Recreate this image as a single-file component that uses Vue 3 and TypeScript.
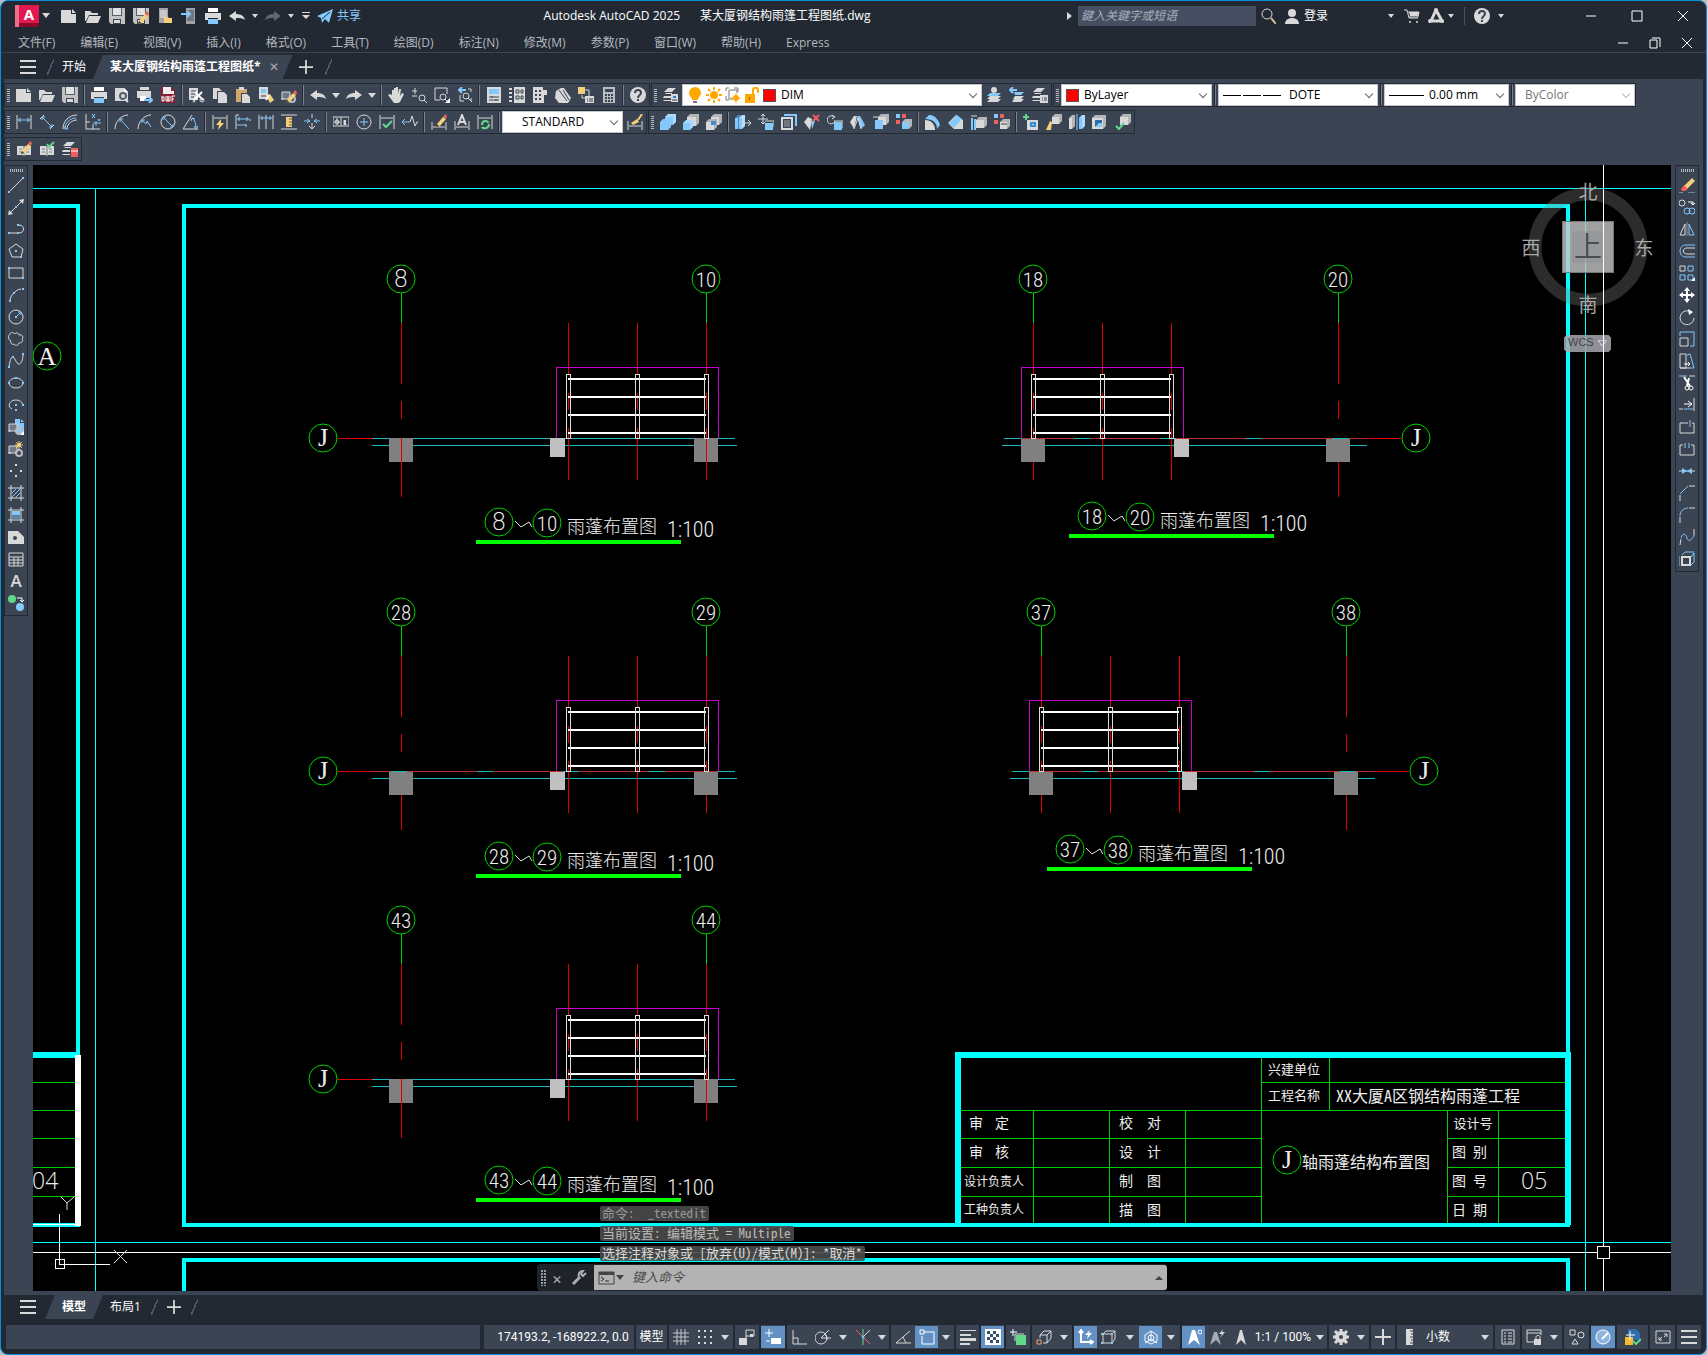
<script setup lang="ts">
import { ref } from 'vue'

const W = '#d9d9d9'
const B = '#85c8fb'
const D = '#3b4453'
const Y = '#f5cf7a'
const R = '#f0605c'
const G = '#62d98a'

const l = (d: string, c = W, w = 1) => `<path d="${d}" fill="none" stroke="${c}" stroke-width="${w}"/>`
const p = (d: string, c = W) => `<path d="${d}" fill="${c}"/>`
const dot = (pts: number[][], c = B) => pts.map(([x, y]) => p(`M${x} ${y}h2v2h-2z`, c)).join('')
const cir = (x: number, y: number, r: number, c = W, w = 1) =>
  `<circle cx="${x}" cy="${y}" r="${r}" fill="none" stroke="${c}" stroke-width="${w}"/>`
const disc = (x: number, y: number, r: number, c = W) => `<circle cx="${x}" cy="${y}" r="${r}" fill="${c}"/>`
const cube = (x: number, y: number, s: number, c = W, t = '#b5b5b5') =>
  p(`M${x} ${y + 3}l3-3h${s}v${s}l-3 3z`, t) + p(`M${x} ${y + 3}h${s}v${s}h-${s}z`, c)
const slab = (x: number, c: string, t: string) => p(`M${x} 4l3-3h3v11l-3 3z`, t) + p(`M${x} 4h3v11h-3z`, c)

const pencil = p('M6 13l6-7 3 2-6 7-4 1z', Y) + p('M12 6l2-3 2 2-1 3z', R) + p('M5 16l1-3 2 2z', '#2b2b2b')
const page = p('M0 2h10v4h5v9H0z') + p('M11 1l4 4h-4z')
const floppy = p('M0 0h16v16H2l-2-2z', '#c2c2c2') + p('M3 0h1v7h8V0h1v8H3z', '#5a606b') + p('M4 0h8v7H4z', '#e2e2e2') + p('M4 11h8v5H4z', D) + p('M5 12h6v3H5z')
const folder = p('M0 3h5l2 2h6v2H4L1 13H0z') + p('M4 8h12l-3 7H1z')
const printer = p('M3 0h10v4H3z', '#fff') + p('M0 5h16v7h-3v-2H3v2H0z') + p('M3 11h10v5H3z', B)
const undo = p('M0 8l7-5v3c5 0 8 2 9 6-3-2-5-2-9-2v3z')
const redo = p('M16 8L9 3v3c-5 0-8 2-9 6 3-2 5-2 9-2v3z')
const layers = p('M5 1h8l-4 4H1z') + p('M3 6h6v1H2zM1 9h7v2H0z') + p('M1 13h7v1H0z')
const stackBlue = p('M4 6h11l-3 3H1z', B) + p('M4 9h11l-3 3H1z') + p('M4 12h11l-3 3H1z')
const book = p('M1 5h6l1 1 1-1h6v9H9l-1 1-1-1H1z') + l('M8 6v8M3 8h3M3 11h3M10 8h3M10 11h3', '#7d838d')
const dimH = l('M1 1v14M15 1v14') + l('M2 4h12')
const block = p('M1 5h8v7H1z', '#727985') + l('M1 5h8v7H1zM0 12h3') + cir(11, 12, 3, '#b7bcc4', 2)

const icons: Record<string, string> = {
  new: page,
  open: folder,
  save: floppy,
  saveas: floppy + pencil,
  openMobile: p('M2 0h9v9H7v6H2z', '#9fa3a9') + p('M3 2h7v8H3z', '#c8c8c8') + p('M7 9h4l1 1h3v5H7z', Y),
  saveMobile: p('M5 0h9v16H5z', '#9fa3a9') + p('M6 2h7v11H6z', '#6f7681') + l('M0 6h9M6 3l3 3-3 3', B, 2),
  print: printer,
  undo,
  redo,
  redoDim: `<g opacity=".35">${redo}</g>`,
  menuDown: p('M4 4h8v1H4z') + p('M4 7h8l-4 4z'),
  plane: p('M0 8L16 1l-4 14-4-4-3 4-1-5z', B) + l('M5 11l8-7', '#222933'),
  preview: p('M1 1h9l4 4v9H1z') + p('M10 1v4h4z', '#fff') + cir(9, 9, 3, '#55606f', 2) + l('M11 12l3 3', W, 2),
  publish: p('M3 0h9v3H3z') + p('M0 4h14v7H0z') + p('M3 9h6v5H3z', '#fff') + l('M7 13h8M12 10l3 3-3 3', B, 2),
  dwf: p('M1 0h10l4 4v12H1z', '#8c1c33') + p('M3 0h8v4h3v3H3z', '#eee') + l('M2 9v5h2v-4H2M6 9v5h2V9v5h2V9M12 15V9h3M12 12h2', '#fff'),
  cut: p('M0 1h9v12H0z') + l('M2 4h5M2 7h5M2 10h3', D) + l('M6 5l8 8M13 5l-8 8', '#fff', 2) + cir(13, 13, 2) + cir(5, 14, 1),
  copy: p('M1 1h6l3 3H5v8H1z') + p('M6 5h6l3 3v8H6z'),
  paste: p('M1 2h11v4H6v9H1z', '#d2a86a') + p('M4 0h5v3H4z') + p('M7 7h5l3 3v6H7z'),
  match: p('M1 0h9v12H1z') + p('M3 2h5v4H3z', B) + l('M3 9h5', D) + p('M8 9l4-2 4 6-4 3z', Y) + l('M11 8l-3 5', '#fff', 2),
  blockEdit: block + pencil,
  pan: p('M4 8V3h2v4V1h2v6V0h2v7l1-5h2l-1 7 2-3 2 1-4 8-2 1H6L0 8l2-1z'),
  zoomRt: l('M1 4h5M4 1v6M1 9h5') + `<g transform="translate(1 2)">${cir(10, 9, 3)}${l('M12 11l3 3')}</g>`,
  zoomWin: l('M1 13V1h12v6') + l('M1 13h5') + cir(9, 10, 3) + l('M11 12l3 3') + p('M11 16h5v-5z', '#fff'),
  zoomPrev: l('M3 8v6h4M14 5V2h-3M14 11v3') + cir(9, 9, 3) + l('M11 11l4 4') + l('M9 3H2M5 0L2 3l3 3', B, 2),
  props: p('M1 0h14v16H1z') + p('M3 2h10v5H3z', B) + l('M3 10h10M3 13h10M6 9v2M10 12v2', D),
  design: p('M0 1h3v2H0zM0 5h3v2H0zM0 9h3v2H0zM0 13h3v2H0zM5 0h11v16H5z') + l('M7 3h3v3H7zM12 3h2v3h-2zM7 9h3v3H7zM12 9h2v3h-2z', D),
  palettes: p('M1 0h10v3h4v5h-3v8H1z') + p('M3 3h2v2H3zM7 3h2v2H7zM3 7h2v2H3zM7 7h2v2H7zM3 11h2v2H3zM7 11h2v2H7z', D),
  sheets: p('M1 4l5-3h3l7 10-3 5H4l-4-5z') + l('M4 3l8 11M8 3l6 10', D),
  markup: p('M0 0h7v7H0z', Y) + l('M7 3h4v6M4 8v3h4') + p('M7 9h9v7H7z') + l('M9 12h1M11 12h4M9 14h1M11 14h4', D),
  calc: p('M2 0h12v16H2z', '#b9bcc1') + p('M4 2h8v3H4z', D) + p('M4 7h2v2H4zM7 7h2v2H7zM10 7h2v2h-2zM4 10h2v2H4zM7 10h2v2H7zM10 10h2v2h-2zM4 13h2v2H4zM7 13h2v2H7zM10 13h2v2h-2z', D),
  help: disc(8, 8, 8) + l('M5 6c0-4 6-4 6 0 0 2-3 2-3 5M8 12v2', '#3b4453', 2),
  layerProps: layers + p('M8 7h7v8H8z') + p('M10 9h3v2h-3z', '#2f7fc4') + l('M9 13h5', D),
  bulb: disc(8, 6, 6, '#ffa800') + p('M5 11h6v2H5z', '#ffa800') + p('M6 14h4v2H6z', '#777'),
  sun: disc(8, 8, 4, '#ffa800') + l('M8 0v3M8 13v3M0 8h3M13 8h3M2 2l2 2M12 12l2 2M14 2l-2 2M4 12l-2 2', '#ffa800', 2),
  vpSun: l('M1 4V1h3M9 1h4v4M1 9v4h3M4 3v9h4M4 3h8v3', '#777') + disc(11, 11, 3, '#ffa800') + l('M11 6v10M6 11h10', '#ffa800'),
  lock: p('M1 7h10v9H1z', '#ffa800') + l('M9 8V3c0-3 5-3 5 0v3', '#ffa800', 2) + p('M5 10h1v3H5z', '#9c6500'),
  layerCur: disc(8, 3, 3) + stackBlue,
  layerPrev: p('M5 5h10l-3 3H6z', B) + p('M6 9h9l-3 3H4z') + p('M5 12h10l-3 3H3z') + l('M8 3H1M4 0L1 3l3 3', B, 2),
  layerStates: layers + p('M8 8h8v8H8z') + l('M10 11h1M12 11h3M10 13h1M12 13h3', D),
  dimLin: l('M1 1v14M15 1v14') + l('M2 6h12M5 4L2 6l3 2M11 4l3 2-3 2', B),
  dimAl: l('M1 5l4-4M11 15l4-4') + l('M3 3l10 10M3 6V3h3M13 10v3h-3', B),
  dimArc: l('M1 15C1 7 7 1 15 1M5 15C5 10 10 6 15 6') + l('M3 15C3 9 8 4 14 4M3 12v3h3', B),
  dimOrd: l('M1 0v15h14M8 10v5M1 8h4') + l('M8 9h8M11 7v5M7 0l3 4M10 0L7 4M13 5l1 2 1-2', B),
  dimRad: l('M1 15C1 8 7 1 14 1') + l('M6 5l9 10M6 8V5h3', B),
  dimJog: l('M1 15C1 8 7 1 14 1') + l('M5 6l4 4 1-3 4 6M5 9V6h3', B),
  dimDia: cir(8, 8, 7) + l('M3 3l10 10M3 6V3h3M13 10v3h-3', B),
  dimAng: l('M15 15H0L9 1') + l('M9 4c3 2 4 6 4 10M8 7l1-3 3 1M11 12l2 3 2-3', B),
  dimQuick: dimH + p('M9 5l-5 6h3l-1 5 6-7H9z', Y),
  dimBase: l('M1 1v14M15 5v2M11 10v3M1 1h3') + l('M2 5h12M2 11h9M4 3v4M12 3v4', B),
  dimCont: l('M1 1v14M8 1v14M15 1v14') + l('M2 4h12M4 2v4M12 2v4', B),
  dimSpace: l('M0 1h16M0 15h16') + p('M5 3h6v10H5z', Y) + l('M8 5h3M8 8h3M8 11h3', '#73592a'),
  dimBreak: l('M8 0v4M8 9v6M5 12l3 3 3-3') + l('M0 7h6M10 7h6M3 5l3 2-3 2M13 5l-3 2 3 2', B),
  tol: l('M0 3h16v9H0zM8 3v9M1 8h6M4 4v7M11 6v5M13 10v1') + cir(4, 8, 2) + l('M12 6v5', W, 2),
  center: cir(8, 8, 7) + l('M4 8h8M8 4v8', B),
  inspect: dimH + l('M4 10l3 3 6-6', G, 2),
  jogLin: l('M8 8l2-6 3 10 2-4h1') + l('M0 8h8M3 5L0 8l3 3', B),
  dimEdit: l('M1 8v8M15 8v8M2 13h12') + `<g transform="translate(0 -3)">${pencil}</g>`,
  dimTedit: l('M1 7v9M15 7v9M2 13h12') + l('M4 11L8 1l4 10M5 8h6', W, 2),
  dimUpd: dimH + l('M5 11c0-5 6-5 6-2M12 10c0 5-6 5-7 3', G, 2),
  dimStyle: l('M1 7v9M15 7v9M2 12h12') + l('M15 0l-4 6', Y, 2) + p('M4 9l6-4 2 3-6 3z', Y),
  union: cube(5, 0, 8, B, '#a9d9ff') + cube(0, 5, 8, B, B),
  subtract: cube(4, 0, 9) + cube(0, 6, 7, B, '#a9d9ff'),
  intersect: cube(5, 0, 8) + cube(0, 5, 8) + p('M5 7h5v4H5z', '#3f8fd0'),
  extrude: slab(0, B, '#4e86b5') + slab(4, B, '#b9dcf7') + l('M10 9h6M13 6l3 3-3 3'),
  moveF: l('M5 0v10M0 5h10M3 2l2-2 2 2M3 8l2 2 2-2') + p('M7 9h8v7H7z', B) + l('M7 7h9v6', W),
  offsetF: l('M1 4h10v11H1z', W, 2) + p('M3 6h6v7H3z', '#6f7681') + l('M3 1h12v11', B, 2),
  deleteF: p('M0 8l4-5 4 2-2 11z') + p('M7 7h4l-3 8z', B) + l('M9 1l6 6M15 1L9 7', R, 2),
  rotateF: l('M7 3a4 4 0 1 0 1 4M5 1l3 2-3 2') + p('M7 8h8v8H7z', B) + l('M7 7h9v7'),
  taperF: p('M0 8l4-6h3L4 15z') + p('M7 2h3l5 9-4 4z', B) + l('M4 15L8 4l3 11'),
  copyF: cube(5, 0, 8) + p('M2 6h8v9H2z', B) + l('M0 3h5'),
  colorF: p('M0 0h4v4H0z', B) + p('M6 0h4v4H6z', R) + p('M0 6h4v4H0z', R) + cube(6, 5, 7, B),
  fillet: p('M0 5l4-4c5-1 10 5 11 10l-3 4C12 9 8 5 0 5z', B) + p('M0 6c6 0 10 4 10 10H0z'),
  chamfer: p('M0 9l8-8 7 5v9H6z') + p('M1 9l8-8 5 4-8 9z', B),
  colorE: cube(5, 3, 8) + l('M1 16V4M4 16V5', B, 2) + l('M0 2h6', W),
  copyE: p('M0 0h4v4H0z', B) + p('M6 0h4v4H6z', R) + p('M0 6h4v4H0z', R) + cube(6, 5, 7) + l('M7 10h6', D),
  imprint: l('M3 0v6M0 3h6', G, 2) + p('M4 6h11v10H4z') + l('M8 9h4v3H8z', '#2f8fd8', 2),
  clean: cube(6, 0, 7) + p('M4 7l2 1-1 8H0z', Y),
  separate: slab(0, W, '#b5b5b5') + slab(10, B, '#a9d9ff') + l('M8 0v16', B),
  shell: cube(0, 1, 11) + p('M3 6h7v7H3z', '#2b6ea5') + p('M7 9h3v4H3z', B),
  checkS: cube(5, 0, 8) + l('M1 12l3 3 5-6', G, 2),
  refEdit: book + `<g transform="translate(0 -3)">${pencil}</g>`,
  refCheck: book + l('M8 3l2 3 5-5', G, 2),
  layerDel: layers + p('M9 7h7v9H9z', R) + l('M9 10h7', '#fff'),
  line: l('M2 14L14 2') + dot([[0, 14], [14, 0]]),
  xline: l('M2 14L14 2') + p('M0 16l1-5 4 4zM16 0l-1 5-4-4z') + dot([[7, 7]]),
  pline: l('M2 12h7M11 4c6 0 6 8 0 8') + dot([[0, 11], [9, 11], [9, 3]]),
  polygon: l('M8 1l7 5-2 8H4L1 6z') + dot([[7, 7], [12, 13]]),
  rect: l('M1 3h14v10H1z') + dot([[0, 2], [14, 12]]),
  arc: l('M2 13C3 8 7 3 13 2') + dot([[1, 13], [5, 5], [14, 1]]),
  circle: cir(8, 8, 7) + l('M10 3h3v3M9 7l4-4', B) + dot([[7, 7]]),
  cloud: l('M2 3c1-3 4-1 5 0 1-2 4-1 4 1 3-1 5 2 3 4 2 2-1 4-3 4-1 3-4 3-5 1-2 1-4-1-3-3C0 9 0 5 2 3z'),
  spline: l('M1 14C2 6 4 3 5 4c3 2 3 7 6 7 2 0 4-4 4-9') + dot([[0, 13], [4, 3], [14, 0]]),
  ellipse: `<ellipse cx="8" cy="8" rx="7" ry="5" fill="none" stroke="${W}"/>` + dot([[0, 7], [14, 7], [7, 2]]),
  ellArc: l('M4 12C-1 10 1 3 8 3c4 0 6 2 7 5') + dot([[7, 7], [14, 7], [7, 12]]),
  insert: p('M7 0h5v4h4v10H9V6H7z', B) + p('M13 0l3 3h-3z', B) + block + p('M16 12v4h-4z', '#fff'),
  block: block + disc(11, 4, 2, Y) + l('M11 0v8M7 4h8M8 1l6 6M14 1L8 7', Y),
  point: dot([[7, 1], [2, 7], [12, 7], [7, 12]], W),
  hatch: l('M3 0v16M13 0v16M0 3h16M0 13h16') + l('M4 8l4-4M4 12l8-8M8 12l4-4', B, 1),
  gradient: l('M3 0v16M13 0v16M0 3h16M0 13h16') + p('M4 4h8v4H4z', B) + p('M4 8h8v4H4z', '#6083a3'),
  region: p('M0 2h10l6 6v7H0z') + disc(7, 9, 2, D),
  table: l('M1 2h14v13H1zM1 6h14M1 9h14M1 12h14M6 6v9M10 6v9'),
  addSel: disc(4, 4, 4, G) + disc(12, 12, 4, B) + l('M9 3h5v4M12 5l2 2 2-2', '#fff'),
  erase: p('M5 9l8-8 3 3-8 8z', Y) + p('M2 12l3-4 4 4-3 2H3z', R) + l('M0 16h4') + l('M9 16h7', B),
  copyO: cir(3, 4, 3) + cir(8, 12, 3, B) + cir(13, 12, 3, B) + l('M9 3h5v3M12 4l2 2 2-2', '#fff'),
  mirror: l('M6 3v11H1z') + l('M10 3v11h5z', B) + l('M8 1v14', '#8d939c'),
  offset: l('M16 2H7c-8 0-8 12 0 12h9', B) + l('M16 5H8c-5 0-5 6 0 6h8', W),
  array: l('M1 1h5v5H1z') + l('M9 1h5v5H9zM1 10h5v5H1zM9 10h5v5H9z', B) + p('M16 12v4h-4z', '#fff'),
  move: l('M8 1v14M1 8h14', '#fff', 2) + p('M8 0l3 4H5zM8 16l3-4H5zM0 8l4-3v6zM16 8l-4-3v6z', '#fff'),
  rotate: l('M12 3a7 7 0 1 0 3 6', W) + p('M9 0l5 3-4 3z', '#fff'),
  scale: l('M1 7h8v8H1z') + l('M1 5V1h14v14h-4', B),
  stretch: l('M7 15H1V1h6v14M1 15h10') + l('M8 2l3-1 4 14h-4', B) + l('M5 11h6M9 9l2 2-2 2', '#fff'),
  trim: l('M0 1h8', B) + l('M10 1h6') + l('M5 2l6 9M10 3L8 11', '#fff', 2) + cir(12, 13, 2, '#fff') + cir(8, 13, 2, '#fff'),
  extend: l('M15 1v13M0 12h4') + l('M5 12h9', B) + l('M5 7h7M9 4l4 3-4 3', '#fff'),
  breakPt: l('M9 4H1v10h14V4h-2') + l('M11 1v7', B),
  breakO: l('M4 4H1v10h14V4h-3') + l('M6 2v5M10 2v5', B),
  join: l('M0 8h16') + p('M3 5l5 3-5 3zM13 5L8 8l5 3z', B),
  chamferO: l('M1 16v-6M10 1h6') + l('M1 9l8-8', B),
  filletO: l('M1 16v-6M10 1h6') + l('M1 9c0-5 4-8 8-8', B),
  blend: l('M1 16l1-6M15 0v6') + l('M2 9c2-6 5-4 6 0s5 3 7-3', B),
  explode: l('M3 6h8v8H3z', W, 2) + l('M3 4l3-3h9M12 6l3-4v9l-3 3M0 5v10', B),
  search: cir(7, 6, 5) + l('M11 10l5 6', '#d8b98a', 2),
  person: disc(8, 5, 4) + p('M1 16c0-8 14-8 14 0z'),
  cart: l('M0 2h3l2 8h9M4 4h11l-1 5H5', W) + p('M5 4h10l-1 4H6z') + disc(6, 14, 1) + disc(13, 14, 1),
  adsk: l('M8 2L3 13h11L8 2', W, 3) + disc(8, 2, 2) + disc(2, 13, 2) + disc(14, 13, 2),
  min: l('M3 8h10', '#fff'),
  max: l('M3 3h10v10H3z', '#fff'),
  restore: l('M3 5h7v8H3zM5 3h8v9', '#fff'),
  close: l('M3 3l10 10M13 3L3 13', '#fff'),
  grid: l('M4 0v16M8 0v16M12 0v16M0 4h16M0 8h16M0 12h16', '#c4c7cc'),
  snap: dot([[1, 1], [7, 1], [13, 1], [1, 7], [7, 7], [13, 7], [1, 13], [7, 13], [13, 13]], W),
  infer: l('M7 11V1h8v6H7') + p('M0 9h8v7H0z') + p('M11 5h3v3h-3z', W),
  dyn: l('M4 0v8M0 4h8', '#fff') + p('M6 9h10v6H6z', '#fff') + l('M1 12h4', '#fff'),
  ortho: l('M2 1v14h14M2 9h5v6', W),
  polar: cir(6, 9, 6) + l('M6 9h10M6 9l8-8M10 6c2 1 2 3 2 5'),
  iso: l('M1 1l14 14', R) + l('M15 1L8 8', W) + l('M8 0v16', G) + cir(8, 8, 1, B),
  otrack: l('M15 2L1 14h15M8 8l3 6', W),
  osnap: l('M5 3h10v12H3V7', '#fff') + l('M1 1h4v4H1z', '#fff', 1),
  lwt: p('M0 1h16v1H0zM0 5h11v2H0zM0 9h16v3H0zM0 14h10v2H0z'),
  transp: p('M0 0h16v16H0z', '#fff') + p('M2 2h3v3H2zM8 2h3v3H8zM5 5h3v3H5zM11 5h3v3h-3zM2 8h3v3H2zM8 8h3v3H8zM5 11h3v3H5zM11 11h3v3h-3z', '#34506f'),
  cycle: l('M3 0v7M0 3h7', '#fff') + p('M6 6h10v10H6z', G) + l('M5 12V5h9', W),
  osnap3: l('M4 9V6h7v8H7M4 6l4-4h7v7l-4 5M11 6l4-4') + l('M1 11h4v4H1z', '#f3a56a', 1),
  ducs: l('M3 1v12h12M1 4l2-3 2 3M12 11l3 2-3 2', '#fff', 2) + p('M12 1L7 6h3l-1 4 5-6h-3z', '#fff'),
  filter: l('M2 5h9v9H2zM5 2h9v8M2 5l3-3M11 5l3-3M11 14l3-4') + dot([[0, 4], [10, 4], [0, 13], [10, 13]]),
  gizmo: l('M8 2L2 6v6l6 3 6-3V6zM8 2v8l-6 4M8 10l6 4', '#fff') + cir(8, 9, 3, '#fff'),
  annoA: p('M6 1h3l5 15-6-5-6 5z', '#fff') + cir(14, 3, 2, '#fff'),
  annoB: p('M5 3h3l4 13-5-5-6 5z', '#a5acb6') + p('M14 0l-4 5h3l-2 4 5-6h-3z', W),
  annoC: p('M7 1h2l4 15-5-5-5 5z'),
  gear: cir(8, 8, 4, W, 4) + l('M8 0v3M8 13v3M0 8h3M13 8h3M2 2l3 3M11 11l3 3M14 2l-3 3M5 11l-3 3', W, 3),
  plus: l('M8 0v16M0 8h16', W, 2),
  ruler: p('M5 0h7v16H5z') + l('M9 2h4M10 5h3M9 8h4M10 11h3M9 14h4', D),
  quick: l('M2 1h12v14H2z') + l('M4 4h2M8 4h4M4 7h2M8 7h4M4 10h2M8 10h4M4 13h2M8 13h4', W),
  lockUi: l('M8 13H1V1h14v5M1 4h14') + p('M8 10h7v6H8z') + l('M10 10V8c0-2 4-2 4 0v2'),
  isolate: l('M1 1h5v5H1zM7 15H3l3-5 3 5z') + cir(12, 6, 3),
  perf: disc(8, 8, 7, '#8fb4dc') + cir(8, 8, 7, '#fff') + l('M7 10l6-6', '#fff', 2),
  trusted: p('M3 0h8l4 4v7H3z', '#2f6fb0') + p('M0 8h8v8H0z', '#f5b82e') + l('M5 2v9M1 6h9', '#fff') + l('M8 12l3 3 5-5', G, 2),
  full: l('M1 2h14v12H1z') + l('M9 5h3v3M7 11H4V8M9 8l3-3M4 11l3-3'),
  lines: p('M0 1h16v2H0zM0 7h16v2H0zM0 13h16v2H0z'),
  wrench: l('M2 14l7-7', '#a9adb3', 3) + l('M15 3l-3 3-2-2 2-3c-4 0-5 3-4 6', '#a9adb3', 2),
}

const menus = ['文件(F)', '编辑(E)', '视图(V)', '插入(I)', '格式(O)', '工具(T)', '绘图(D)', '标注(N)', '修改(M)', '参数(P)', '窗口(W)', '帮助(H)', 'Express']
const quickAccess = ['new', 'open', 'save', 'saveas', 'openMobile', 'saveMobile', 'print', 'undo', 'v', 'redoDim', 'v', 'menuDown']
const standard = ['new', 'open', 'save', '|', 'print', 'preview', 'publish', 'dwf', '|', 'cut', 'copy', 'paste', 'match', 'blockEdit', '|', 'undo', 'v', 'redo', 'v', '|', 'pan', 'zoomRt', 'zoomWin', 'zoomPrev', '|', 'props', 'design', 'palettes', 'sheets', 'markup', 'calc', '|', 'help']
const dims = ['dimLin', 'dimAl', 'dimArc', 'dimOrd', '|', 'dimRad', 'dimJog', 'dimDia', 'dimAng', '|', 'dimQuick', 'dimBase', 'dimCont', 'dimSpace', 'dimBreak', '|', 'tol', 'center', 'inspect', 'jogLin', '|', 'dimEdit', 'dimTedit', 'dimUpd', '|']
const solids = ['union', 'subtract', 'intersect', '|', 'extrude', 'moveF', 'offsetF', 'deleteF', 'rotateF', 'taperF', 'copyF', 'colorF', '|', 'fillet', 'chamfer', 'colorE', 'copyE', '|', 'imprint', 'clean', 'separate', 'shell', 'checkS']
const refs = ['refEdit', 'refCheck', 'layerDel']
const drawTools = ['line', 'xline', 'pline', 'polygon', 'rect', 'arc', 'circle', 'cloud', 'spline', 'ellipse', 'ellArc', 'insert', 'block', 'point', 'hatch', 'gradient', 'region', 'table', 'text', 'addSel']
const modifyTools = ['erase', 'copyO', 'mirror', 'offset', 'array', 'move', 'rotate', 'scale', 'stretch', 'trim', 'extend', 'breakPt', 'breakO', 'join', 'chamferO', 'filletO', 'blend', 'explode']

interface StatusItem { icon?: string; text?: string; w: number; on?: boolean; caret?: boolean }
const statusGroups: StatusItem[][] = [
  [{ text: '模型', w: 31 }],
  [{ icon: 'grid', w: 24 }, { icon: 'snap', w: 24 }, { caret: true, w: 16 }],
  [{ icon: 'infer', w: 24 }],
  [{ icon: 'dyn', w: 24, on: true }],
  [{ icon: 'ortho', w: 24 }, { icon: 'polar', w: 23 }, { caret: true, w: 17 }, { icon: 'iso', w: 23 }, { caret: true, w: 15 }],
  [{ icon: 'otrack', w: 24 }, { icon: 'osnap', w: 23, on: true }, { caret: true, w: 16 }],
  [{ icon: 'lwt', w: 23 }],
  [{ icon: 'transp', w: 23, on: true }],
  [{ icon: 'cycle', w: 24 }],
  [{ icon: 'osnap3', w: 24 }, { caret: true, w: 16 }],
  [{ icon: 'ducs', w: 23, on: true }, { icon: 'filter', w: 24 }, { caret: true, w: 18 }, { icon: 'gizmo', w: 23, on: true }, { caret: true, w: 18 }],
  [{ icon: 'annoA', w: 23, on: true }, { icon: 'annoB', w: 24 }, { icon: 'annoC', w: 24 }, { text: '1:1 / 100%', w: 60 }, { caret: true, w: 14 }],
  [{ icon: 'gear', w: 24 }, { caret: true, w: 16 }],
  [{ icon: 'plus', w: 24 }],
  [{ icon: 'ruler', w: 24 }, { text: '小数', w: 34 }, { text: '', w: 22 }, { caret: true, w: 16 }],
  [{ icon: 'quick', w: 25 }],
  [{ icon: 'lockUi', w: 24 }, { caret: true, w: 16 }],
  [{ icon: 'isolate', w: 25 }],
  [{ icon: 'perf', w: 24, on: true }],
  [{ icon: 'trusted', w: 31 }],
  [{ icon: 'full', w: 25 }],
  [{ icon: 'lines', w: 24 }],
]

interface Detail { x: number; y: number; flip: boolean; a: string; b: string; tx: number; ty: number; red: boolean }
const details: Detail[] = [
  { x: 401, y: 0, flip: false, a: '8', b: '10', tx: 499, ty: 522, red: false },
  { x: 1033, y: 0, flip: true, a: '18', b: '20', tx: 1092, ty: 516, red: true },
  { x: 401, y: 333, flip: false, a: '28', b: '29', tx: 499, ty: 856, red: true },
  { x: 1041, y: 333, flip: true, a: '37', b: '38', tx: 1070, ty: 849, red: true },
  { x: 401, y: 641, flip: false, a: '43', b: '44', tx: 499, ty: 1180, red: false },
]
const SPAN = 305
const px = (d: Detail, x: number) => d.x + (d.flip ? SPAN - x : x)
const rx = (d: Detail, x: number, w: number) => (d.flip ? px(d, x + w) : px(d, x))
const posts = [167, 236, 305]
const beams = [379, 397, 415, 433]

interface Label { x: number; y: number; t: string; s: number }
const labels: Label[] = [
  { x: 1294, y: 1070, t: '兴建单位', s: 13 },
  { x: 1294, y: 1096, t: '工程名称', s: 13 },
  ...[['审', '定', '校', '对'], ['审', '核', '设', '计'], ['', '', '制', '图'], ['', '', '描', '图']].flatMap((row, i) =>
    [976, 1002, 1126, 1154].map((x, j) => ({ x, y: 1124 + i * 29, t: row[j], s: 14 })),
  ),
  { x: 994, y: 1182, t: '设计负责人', s: 12 },
  { x: 994, y: 1210, t: '工种负责人', s: 12 },
  { x: 1473, y: 1124, t: '设计号', s: 13 },
  ...[['图', '别'], ['图', '号'], ['日', '期']].flatMap((row, i) =>
    [1459, 1480].map((x, j) => ({ x, y: 1153 + i * 29, t: row[j], s: 14 })),
  ),
]

const keyword = ref('')
const command = ref('')
</script>

<template>
  <div class="window">
    <header class="title">
      <button class="app" aria-label="应用程序菜单"><b>A</b></button>
      <span class="caret app-caret"></span>
      <div class="qat">
        <template v-for="(i, k) in quickAccess" :key="k">
          <span v-if="i === 'v'" class="caret small"></span>
          <button v-else class="q" :aria-label="i"><svg viewBox="0 0 16 16" v-html="icons[i]"></svg></button>
        </template>
      </div>
      <button class="share"><svg viewBox="0 0 16 16" v-html="icons.plane"></svg>共享</button>
      <div class="spacer"></div>
      <h1><span>Autodesk AutoCAD 2025</span><span>某大厦钢结构雨篷工程图纸.dwg</span></h1>
      <div class="spacer"></div>
      <div class="info">
        <span class="tri"></span>
        <input v-model="keyword" type="text" aria-label="搜索" placeholder="鍵入关鍵字或短语" />
        <button class="q" aria-label="搜索"><svg viewBox="0 0 16 16" v-html="icons.search"></svg></button>
        <button class="login"><svg viewBox="0 0 16 16" v-html="icons.person"></svg>登录</button>
        <span class="caret small"></span>
        <button class="q" aria-label="购物车"><svg viewBox="0 0 16 16" v-html="icons.cart"></svg></button>
        <button class="q" aria-label="Autodesk"><svg viewBox="0 0 16 16" v-html="icons.adsk"></svg></button>
        <span class="caret small"></span>
        <span class="bar"></span>
        <button class="q" aria-label="帮助"><svg viewBox="0 0 16 16" v-html="icons.help"></svg></button>
        <span class="caret small"></span>
      </div>
      <div class="win">
        <button v-for="i in ['min', 'max', 'close']" :key="i" :aria-label="i"><svg viewBox="0 0 16 16" v-html="icons[i]"></svg></button>
      </div>
    </header>

    <nav class="menu">
      <a v-for="m in menus" :key="m" href="#">{{ m }}</a>
      <div class="spacer"></div>
      <div class="doc">
        <button v-for="i in ['min', 'restore', 'close']" :key="i" :aria-label="i"><svg viewBox="0 0 16 16" v-html="icons[i]"></svg></button>
      </div>
    </nav>

    <div class="tabs files">
      <button class="burger" aria-label="文件列表"><svg viewBox="0 0 16 16" v-html="icons.lines"></svg></button>
      <span class="slash"></span>
      <button class="tab">开始</button>
      <button class="tab active">某大厦钢结构雨篷工程图纸*<i>✕</i></button>
      <button class="add" aria-label="新图形"><svg viewBox="0 0 16 16" v-html="icons.plus"></svg></button>
      <span class="slash"></span>
    </div>

    <section class="bars">
      <div class="row">
        <div class="toolbar">
          <span class="grip"></span>
          <template v-for="(i, k) in standard" :key="k">
            <span v-if="i === '|'" class="sep"></span>
            <span v-else-if="i === 'v'" class="caret"></span>
            <button v-else :aria-label="i"><svg viewBox="0 0 16 16" v-html="icons[i]"></svg></button>
          </template>
        </div>
        <div class="toolbar">
          <span class="grip"></span>
          <button aria-label="图层特性"><svg viewBox="0 0 16 16" v-html="icons.layerProps"></svg></button>
          <label class="combo layer">
            <svg v-for="i in ['bulb', 'sun', 'vpSun', 'lock']" :key="i" viewBox="0 0 16 16" v-html="icons[i]"></svg>
            <span class="swatch"></span>
            <select aria-label="图层"><option>DIM</option></select><i></i>
          </label>
          <button v-for="i in ['layerCur', 'layerPrev', 'layerStates']" :key="i" :aria-label="i"><svg viewBox="0 0 16 16" v-html="icons[i]"></svg></button>
        </div>
        <div class="toolbar">
          <span class="grip"></span>
          <label class="combo color"><span class="swatch"></span><select aria-label="颜色"><option>ByLayer</option></select><i></i></label>
          <span class="sep"></span>
          <label class="combo ltype"><span class="dashes"></span><select aria-label="线型"><option>DOTE</option></select><i></i></label>
          <span class="sep"></span>
          <label class="combo lweight"><span class="stroke"></span><select aria-label="线宽"><option>0.00 mm</option></select><i></i></label>
          <span class="sep"></span>
          <label class="combo plot"><select aria-label="打印样式" disabled><option>ByColor</option></select><i></i></label>
        </div>
      </div>
      <div class="row">
        <div class="toolbar">
          <span class="grip"></span>
          <template v-for="(i, k) in dims" :key="k">
            <span v-if="i === '|'" class="sep"></span>
            <button v-else :aria-label="i"><svg viewBox="0 0 16 16" v-html="icons[i]"></svg></button>
          </template>
          <label class="combo dimstyle"><select aria-label="标注样式"><option>STANDARD</option></select><i></i></label>
          <button aria-label="标注样式管理"><svg viewBox="0 0 16 16" v-html="icons.dimStyle"></svg></button>
        </div>
        <div class="toolbar">
          <span class="grip"></span>
          <template v-for="(i, k) in solids" :key="k">
            <span v-if="i === '|'" class="sep"></span>
            <button v-else :aria-label="i"><svg viewBox="0 0 16 16" v-html="icons[i]"></svg></button>
          </template>
        </div>
      </div>
      <div class="row">
        <div class="toolbar">
          <span class="grip"></span>
          <button v-for="i in refs" :key="i" :aria-label="i"><svg viewBox="0 0 16 16" v-html="icons[i]"></svg></button>
        </div>
      </div>
    </section>

    <main class="work">
      <div class="side left">
        <div class="toolbar vertical">
          <span class="grip"></span>
          <template v-for="i in drawTools" :key="i">
            <button v-if="i === 'text'" class="mtext">A</button>
            <button v-else :aria-label="i"><svg viewBox="0 0 16 16" v-html="icons[i]"></svg></button>
          </template>
        </div>
      </div>

      <div class="canvas">
        <svg class="sheet" viewBox="33 165 1638 1126" preserveAspectRatio="xMinYMin slice">
          <g class="thin cyan">
            <path d="M33 188H1671M95 188V1291M1585 188V1291M33 1242H1671" />
          </g>
          <g class="thick cyan">
            <path d="M33 206H78V1227M184 204V1225H1570M182 206H1568V1227M184 1291V1260H1568V1291" />
          </g>

          <path class="cyan bold" d="M33 1055H76" />
          <path class="green" d="M33 1082H75M33 1110H75M33 1138H75M33 1167H75M33 1196H75" />
          <path class="thick cyan" d="M33 1225H78" />
          <path class="white" d="M33 1224H75" />
          <rect x="75" y="1055" width="6" height="171" fill="#fff" />
          <text class="num" x="32" y="1189">04</text>
          <circle class="green" cx="47" cy="356" r="14" />
          <text class="roman" x="47" y="365">A</text>

          <g v-for="d in details" :key="d.a">
            <g :transform="`translate(0 ${d.y})`">
              <path class="cyan dimc" :d="`M${px(d, -29)} 438H${px(d, 334)}M${px(d, -29)} 445H${px(d, 336)}`" />
              <rect :x="rx(d, -12, 24)" y="438" width="24" height="24" fill="#808080" />
              <rect :x="rx(d, 293, 24)" y="438" width="24" height="24" fill="#808080" />
              <rect :x="rx(d, 149, 15)" y="438" width="15" height="19" fill="#c0c0c0" />
              <template v-if="d.red">
                <path class="cyan dimc" :d="`M${px(d, -29)} 438H${px(d, 317)}`" />
                <path class="redmix" :d="`M${px(d, -29)} 438H${px(d, 317)}`" />
              </template>
              <path class="red" :d="`M${px(d, -63)} 438H${px(d, -29)}`" />
              <path class="red" :d="`M${px(d, 0)} 323V384M${px(d, 0)} 401V419M${px(d, 0)} ${d.red ? 462 : 438}V497`" />
              <path
                v-for="x in posts" :key="x" class="red"
                :d="`M${px(d, x)} 323V374M${px(d, x)} 393V410M${px(d, x)} 428V438M${px(d, x)} ${d.red && x === 305 ? 462 : 438}V480`"
              />
              <path class="magenta" :d="`M${px(d, 155)} 438V367H${px(d, 317)}V438`" />
              <path v-for="y in beams" :key="y" class="beam" :d="`M${px(d, 167)} ${y}H${px(d, 305)}`" />
              <rect v-for="x in posts" :key="x" class="white post" :x="px(d, x) - 2" y="374" width="4" height="64" />
              <path class="green" :d="`M${d.x} 293V323M${d.x + SPAN} 293V323`" />
              <circle class="green" :cx="d.x" cy="279" r="14" />
              <circle class="green" :cx="d.x + SPAN" cy="279" r="14" />
              <circle class="green" :cx="px(d, -78)" cy="438" r="14" />
              <text :class="d.a.length > 1 ? 'tag' : 'tag wide'" :x="d.x" y="287">{{ d.a }}</text>
              <text class="tag" :x="d.x + SPAN" y="287">{{ d.b }}</text>
              <text class="roman" :x="px(d, -78)" y="446">J</text>
            </g>
            <g :transform="`translate(${d.tx} ${d.ty})`">
              <circle class="green" cx="0" cy="0" r="14" />
              <circle class="green" cx="48" cy="1" r="14" />
              <text :class="d.a.length > 1 ? 'tag' : 'tag wide'" x="0" y="8">{{ d.a }}</text>
              <text class="tag" x="48" y="9">{{ d.b }}</text>
              <path class="zig" d="M16 -1L22 5L30 0L33 5" />
              <text class="caption" x="68" y="11">雨蓬布置图</text>
              <text class="ratio" x="168" y="15">1:100</text>
              <path d="M-23 20H182" stroke="#0f0" stroke-width="4" fill="none" />
            </g>
          </g>

          <g class="green">
            <path d="M1261 1056V1223M1329 1056V1110M1261 1082H1565M960 1110H1565" />
            <path d="M960 1138H1261M960 1167H1261M960 1196H1261M1447 1138H1565M1447 1167H1565M1447 1196H1565" />
            <path d="M1033 1110V1223M1109 1110V1223M1185 1110V1223M1447 1110V1223M1498 1110V1223" />
          </g>
          <path class="cyan bold" d="M958 1225V1055H1568V1225" />
          <text v-for="(t, k) in labels" :key="k" class="cell" :x="t.x" :y="t.y + 4" :font-size="t.s">{{ t.t }}</text>
          <text class="name" x="1336" y="1102">XX大厦A区钢结构雨蓬工程</text>
          <circle class="green" cx="1287" cy="1160" r="14" />
          <text class="roman" x="1287" y="1168">J</text>
          <text class="name" x="1302" y="1168">轴雨蓬结构布置图</text>
          <text class="num" x="1521" y="1189">05</text>

          <circle cx="1588" cy="247" r="53" fill="none" stroke="#808080" stroke-opacity=".34" stroke-width="13" />
          <rect x="1562" y="221" width="51" height="51" fill="#c8c8c8" fill-opacity=".8" stroke="#777" />
          <rect x="1572" y="231" width="31" height="32" fill="#8c9098" fill-opacity=".5" />
          <text class="top" x="1588" y="257">上</text>
          <text class="compass" x="1588" y="199">北</text>
          <text class="compass" x="1588" y="312">南</text>
          <text class="compass" x="1531" y="255">西</text>
          <text class="compass" x="1644" y="255">东</text>
          <rect x="1564" y="335" width="47" height="17" rx="4" fill="#a8a8b2" fill-opacity=".85" />
          <text class="wcs" x="1568" y="346">WCS</text>
          <path d="M1598 340H1607L1602 346Z" fill="none" stroke="#c5c5cc" />

          <path class="white" d="M33 1252H1597M1610 1252H1671M1603 165V1246M1603 1259V1291M1597 1246H1609V1258H1597Z" />
          <path class="white" d="M59 1214V1264H110M55 1259H64V1268H55Z" />
          <path class="ucs" d="M61 1197L67 1203L74 1197M67 1203V1210M114 1250L127 1263M127 1250L114 1263" />
        </svg>

        <div class="cmd">
          <p class="old">命令:&nbsp; _textedit</p>
          <p class="mid">当前设置: 编辑模式 = Multiple</p>
          <p>选择注释对象或 [放弃(U)/模式(M)]: *取消*</p>
          <div class="line">
            <span class="grip2"></span>
            <button class="x" aria-label="关闭">✕</button>
            <button aria-label="自定义"><svg viewBox="0 0 16 16" v-html="icons.wrench"></svg></button>
            <div class="field">
              <svg viewBox="0 0 18 16"><path d="M1 2h15v12H1z" fill="none" stroke="#444" /><path d="M1 2h15v3H1z" fill="#444" /><path d="M3 7l3 2-3 2M7 11h4" fill="none" stroke="#333" /></svg>
              <span class="caret dark"></span>
              <input v-model="command" type="text" aria-label="命令" placeholder="键入命令" />
              <span class="up"></span>
            </div>
          </div>
        </div>
      </div>

      <div class="side right">
        <div class="toolbar vertical">
          <span class="grip"></span>
          <button v-for="i in modifyTools" :key="i" :aria-label="i"><svg viewBox="0 0 16 16" v-html="icons[i]"></svg></button>
        </div>
      </div>
    </main>

    <div class="tabs layouts">
      <button class="burger" aria-label="布局列表"><svg viewBox="0 0 16 16" v-html="icons.lines"></svg></button>
      <button class="tab active">模型</button>
      <button class="tab second">布局1</button>
      <span class="slash"></span>
      <button class="add" aria-label="新布局"><svg viewBox="0 0 16 16" v-html="icons.plus"></svg></button>
      <span class="slash"></span>
    </div>

    <footer class="status">
      <div class="group fill"></div>
      <div class="group coords">174193.2, -168922.2, 0.0</div>
      <div v-for="(g, k) in statusGroups" :key="k" class="group">
        <template v-for="(s, j) in g" :key="j">
          <span v-if="s.caret" class="slot" :style="{ width: s.w + 'px' }"><span class="caret"></span></span>
          <button v-else :class="{ on: s.on }" :style="{ width: s.w + 'px' }" :aria-label="s.text || s.icon">
            <svg v-if="s.icon" viewBox="0 0 16 16" v-html="icons[s.icon]"></svg><template v-else>{{ s.text }}</template>
          </button>
        </template>
      </div>
    </footer>
  </div>
</template>

<style>
body {
  margin: 0;
  background: #b9bec3;
}
</style>

<style scoped>
.window {
  box-sizing: border-box;
  height: 100vh;
  min-height: 700px;
  display: flex;
  flex-direction: column;
  background: #222933;
  border: 1px solid #0a8fdc;
  border-radius: 8px;
  overflow: hidden;
  color: #fff;
  font: 12px/16px 'Open Sans', 'Noto Sans', 'Noto Sans CJK SC', sans-serif;
}
button {
  border: 0;
  padding: 0;
  margin: 0;
  background: none;
  color: inherit;
  font: inherit;
  display: flex;
  align-items: center;
  justify-content: center;
  flex: none;
}
button svg {
  width: 16px;
  height: 16px;
  flex: none;
}
.spacer {
  flex: 1;
}
.caret {
  flex: none;
  width: 0;
  height: 0;
  border: 4px solid transparent;
  border-top: 5px solid #d9d9d9;
  border-bottom: 0;
}
.caret.small {
  border-width: 4px 3px 0;
}
.caret.dark {
  border-top-color: #444;
}

.title {
  box-sizing: border-box;
  display: flex;
  align-items: center;
  height: 31px;
  flex: none;
  padding: 0 0 2px 14px;
}
.app {
  width: 24px;
  height: 22px;
  background: linear-gradient(#e3184f 0 80%, #8b0a2b 80%);
  border-left: 4px solid #ee6f8d;
  box-sizing: border-box;
}
.app b {
  font-size: 15px;
  margin-bottom: 4px;
}
.app-caret {
  margin: 0 7px 0 3px;
}
.qat {
  display: flex;
  align-items: center;
}
.qat .q {
  width: 24px;
}
.qat .q:last-child {
  width: 18px;
}
.qat .caret {
  margin: 0 3px;
}
.share {
  color: #85c8fb;
  gap: 4px;
  margin-left: 2px;
}
.title h1 {
  margin: 0 14px 0 0;
  font-size: 12px;
  font-weight: 400;
  display: flex;
  gap: 20px;
  white-space: nowrap;
}
.info {
  display: flex;
  align-items: center;
  height: 20px;
}
.tri {
  border: 4px solid transparent;
  border-left: 5px solid #d9d9d9;
  border-right: 0;
  margin-right: 6px;
}
.info input {
  box-sizing: border-box;
  width: 178px;
  height: 20px;
  border: 0;
  padding: 0 3px;
  background: #454f61;
  color: #fff;
  font: inherit;
}
.info input::placeholder {
  color: #a9b0bb;
  font-style: italic;
  opacity: 1;
}
.info .q {
  width: 24px;
}
.login {
  gap: 4px;
  margin: 0 60px 0 4px;
}
.login + .caret + .q {
  margin-left: 6px;
}
.info .bar {
  width: 1px;
  height: 18px;
  background: #4a5262;
  margin: 0 5px 0 10px;
}
.info .bar + .q + .caret {
  margin-left: 4px;
}
.win {
  display: flex;
  margin-left: 64px;
}
.win button {
  width: 46px;
}

.menu {
  box-sizing: border-box;
  display: flex;
  align-items: center;
  gap: 25px;
  height: 21px;
  flex: none;
  padding: 2px 0 0 17px;
  border-bottom: 1px solid #3b4453;
}
.menu a {
  color: #b4b8bf;
  text-decoration: none;
  white-space: nowrap;
}
.doc {
  display: flex;
  padding-right: 3px;
}
.doc button {
  width: 32px;
}

.tabs {
  display: flex;
  align-items: flex-end;
  flex: none;
}
.files {
  height: 26px;
}
.layouts {
  height: 24px;
  border-top: 4px solid #3b4453;
  margin: 0 3px;
}
.tabs button {
  height: 24px;
}
.burger {
  margin-left: 19px;
}
.layouts .burger {
  margin-left: 16px;
}
.slash {
  width: 7px;
  height: 16px;
  margin: 0 12px 4px;
  background: linear-gradient(113deg, transparent 45%, #545d6c 45% 56%, transparent 56%);
}
.files .slash:nth-child(2) {
  margin: 0 8px 4px 11px;
}
.layouts .slash {
  margin: 0 9px 4px 10px;
}
.files .tab.active {
  margin-left: 7px;
}
.tab.active {
  background: #3b4453;
  clip-path: polygon(10px 0, 100% 0, calc(100% - 10px) 100%, 0 100%);
  font-weight: 700;
  padding: 0 14px 0 17px;
}
.tab i {
  font-style: normal;
  font-weight: 400;
  color: #aaa;
  margin-left: 8px;
}
.layouts .tab.active {
  margin-left: 9px;
  padding: 0 17px;
}
.tab.second {
  margin-left: 7px;
}
.add {
  margin-left: 6px;
}
.add svg {
  width: 14px;
  height: 14px;
}
.layouts .add {
  margin-left: 0;
}

.bars {
  display: flex;
  flex-direction: column;
  gap: 3px;
  padding: 4px 0;
  margin: 0 3px;
  background: #3b4453;
  flex: none;
}
.row {
  display: flex;
  gap: 1px;
}
.toolbar {
  box-sizing: border-box;
  display: flex;
  align-items: center;
  height: 24px;
  border: 1px solid #222933;
  flex: none;
}
.toolbar button {
  width: 23px;
  height: 22px;
}
.toolbar > .caret {
  margin: 0 2px 0 3px;
}
.grip {
  width: 3px;
  height: 15px;
  margin: 0 2px;
  background: repeating-linear-gradient(transparent 0 1px, #b5b9c0 1px 2px);
}
.sep {
  width: 1px;
  height: 20px;
  background: #7b828e;
  margin: 0 2px;
  border-left: 1px solid #222933;
}
.combo {
  box-sizing: border-box;
  display: flex;
  align-items: center;
  height: 22px;
  background: #fff;
  border: 1px solid #c3c6ca;
  color: #000;
  padding: 0 5px 0 4px;
}
.combo > svg {
  width: 16px;
  height: 16px;
  margin-right: 3px;
  flex: none;
}
.combo select {
  appearance: none;
  flex: 1;
  min-width: 0;
  border: 0;
  padding: 0;
  background: none;
  color: #000;
  font: inherit;
}
.combo i {
  width: 5px;
  height: 5px;
  border: solid #666;
  border-width: 0 1px 1px 0;
  transform: rotate(45deg);
  margin-bottom: 3px;
}
.combo select:disabled {
  color: #777;
  opacity: 1;
}
.combo select:disabled + i {
  border-color: #bbb;
}
.layer {
  width: 300px;
}
.swatch {
  width: 11px;
  height: 11px;
  border: 1px solid #555;
  background: #f00;
  margin-right: 5px;
}
.color {
  width: 151px;
}
.ltype {
  width: 160px;
}
.dashes {
  width: 60px;
  height: 1px;
  background: repeating-linear-gradient(90deg, #000 0 18px, #fff 18px 20px);
  margin-right: 6px;
}
.lweight {
  width: 125px;
}
.stroke {
  width: 35px;
  height: 1px;
  background: #000;
  margin-right: 5px;
}
.plot {
  width: 120px;
  padding-left: 9px;
}
.dimstyle {
  width: 121px;
  padding-left: 19px;
}

.work {
  display: flex;
  flex: 1;
  min-height: 0;
  margin: 0 3px;
  background: #3b4453;
}
.side {
  flex: none;
  box-sizing: border-box;
}
.left {
  width: 29px;
}
.right {
  width: 32px;
  padding-left: 4px;
}
.vertical {
  flex-direction: column;
  width: 24px;
  height: auto;
  padding-bottom: 1px;
}
.toolbar.vertical button {
  width: 22px;
}
.vertical .grip {
  width: 15px;
  height: 3px;
  margin: 3px 0 2px;
  background: repeating-linear-gradient(90deg, transparent 0 1px, #b5b9c0 1px 2px);
}
.mtext {
  font-size: 17px;
  font-weight: 600;
  color: #d9d9d9;
}
.canvas {
  flex: 1;
  min-width: 0;
  position: relative;
  background: #000;
  overflow: hidden;
}
.sheet {
  display: block;
  width: 100%;
  height: 100%;
}
.sheet path,
.sheet rect {
  shape-rendering: crispEdges;
}
.sheet path.ucs,
.sheet path.zig {
  shape-rendering: auto;
  fill: none;
  stroke: #ddd;
}
.cyan {
  fill: none;
  stroke: #0ff;
}
.dimc {
  stroke: #18b9bf;
}
.thick {
  stroke-width: 4px;
}
.bold {
  stroke-width: 6px;
}
.green {
  fill: none;
  stroke: #00d000;
}
.red {
  fill: none;
  stroke: #e00000;
}
.redmix {
  fill: none;
  stroke: #b83030;
  stroke-dasharray: 70 16;
  stroke-dashoffset: 51px;
}
.magenta {
  fill: none;
  stroke: #c800c8;
}
.white {
  fill: none;
  stroke: #fff;
}
.post {
  stroke: #ddd;
}
.beam {
  fill: none;
  stroke: #fff;
  stroke-width: 2px;
}
.sheet text {
  fill: #eee;
}
.tag {
  font: 300 21px 'Liberation Sans Narrow', 'Roboto Condensed', 'Liberation Serif', serif;
  text-anchor: middle;
}
.tag.wide {
  font: 200 24px 'DejaVu Sans', sans-serif;
}
.roman {
  font: 26px 'Liberation Serif', serif;
  text-anchor: middle;
}
.num {
  font: 300 23px 'Open Sans', 'Noto Sans', sans-serif;
}
.caption {
  font: 300 18px 'Noto Sans CJK SC', sans-serif;
}
.ratio {
  font: 300 22px 'Liberation Sans Narrow', 'Roboto Condensed', Roboto, sans-serif;
}
.cell {
  font-family: 'Noto Sans CJK SC', sans-serif;
  text-anchor: middle;
}
.name {
  font: 300 16px 'Noto Sans Mono CJK SC', 'Noto Sans CJK SC', sans-serif;
}
.sheet .compass {
  font: 19px 'Noto Sans CJK SC', sans-serif;
  text-anchor: middle;
  fill: #a8a8a8;
}
.sheet .top {
  font: 28px 'Noto Sans CJK SC', sans-serif;
  text-anchor: middle;
  fill: #4a4d50;
}
.sheet .wcs {
  font: 11px 'Liberation Sans', sans-serif;
  fill: #44444a;
}

.cmd {
  position: absolute;
  bottom: 0;
  left: 50%;
  transform: translateX(-50%);
  width: 630px;
  display: flex;
  flex-direction: column;
  align-items: flex-start;
  font: 13px/14px 'Noto Sans Mono CJK SC', 'Liberation Mono', 'Noto Sans CJK SC', monospace;
}
.cmd p {
  margin: 0 0 5px 63px;
  padding: 0 3px 1px 2px;
  border-radius: 2px;
  background: rgba(75, 75, 75, 0.9);
  color: #ddd;
  white-space: pre;
}
.cmd .mid {
  color: #bbb;
}
.cmd .old {
  color: #999;
}
.line {
  display: flex;
  align-items: center;
  align-self: stretch;
  height: 27px;
  margin-top: -2px;
  background: #1e2229;
  border-radius: 4px;
}
.grip2 {
  width: 5px;
  height: 17px;
  margin: 0 6px 0 4px;
  background: repeating-linear-gradient(#1e2229 0 1px, transparent 1px 3px), repeating-linear-gradient(90deg, #999 0 2px, transparent 2px 3px);
}
.line .x {
  width: 10px;
  margin-right: 9px;
  color: #aaa;
  font-size: 15px;
}
.field {
  flex: 1;
  display: flex;
  align-items: center;
  height: 25px;
  margin-left: 7px;
  padding: 0 4px;
  background: #b3b3b3;
  border-radius: 0 3px 3px 0;
}
.field svg {
  width: 18px;
  height: 16px;
}
.field input {
  flex: 1;
  min-width: 0;
  border: 0;
  padding: 0 8px 2px;
  background: none;
  font: inherit;
}
.field input::placeholder {
  color: #4a4a4a;
  font-style: italic;
  opacity: 1;
}
.up {
  border: 4px solid transparent;
  border-top: 0;
  border-bottom-color: #444;
}

.status {
  display: flex;
  gap: 2px;
  padding: 6px 5px 5px;
  height: 24px;
  flex: none;
}
.group {
  display: flex;
  align-items: center;
  background: #3b4453;
  flex: none;
  font-family: Roboto, 'Noto Sans CJK SC', sans-serif;
}
.fill {
  flex: 1;
}
.coords {
  box-sizing: border-box;
  width: 150px;
  margin-left: 2px;
  padding-left: 8px;
  justify-content: center;
}
.group button {
  height: 22px;
  white-space: nowrap;
}
.group button.on {
  background: #6391c4;
}
.slot {
  display: flex;
  justify-content: center;
}
</style>
